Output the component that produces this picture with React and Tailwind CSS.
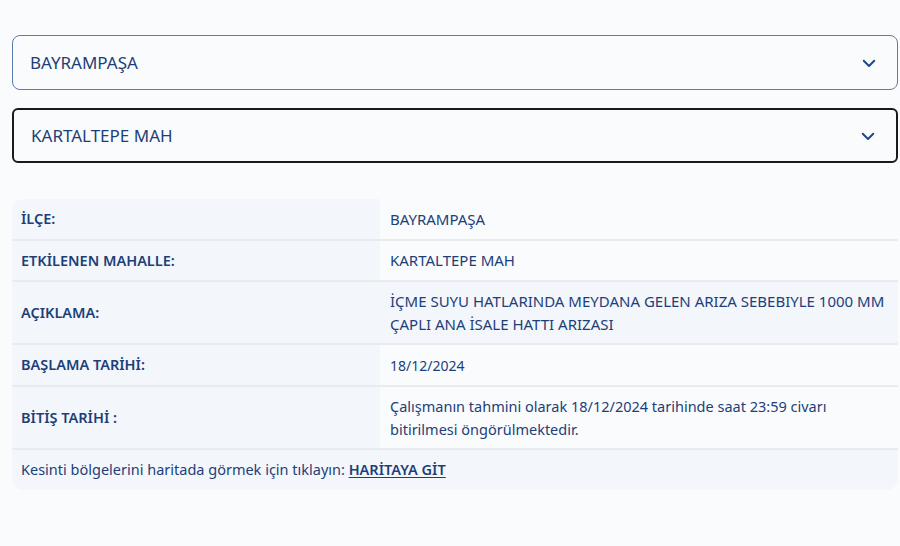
import React from 'react';

const Chevron = () => (
    <svg width="18" height="18" viewBox="0 0 24 24" fill="none" stroke="#1d4785" strokeWidth="2.6" strokeLinecap="round" strokeLinejoin="round">
        <path d="M5 9l7 7 7-7" />
    </svg>
);

const SelectBox = ({ value, active }) => (
    <div
        className={`flex items-center justify-between h-[55px] pl-[17px] pr-[19px] bg-[#f9fbfd] ${active ? 'border-2 border-[#1a1a1a] rounded-md' : 'border border-[#5b7cb3] rounded-lg'}`}
    >
        <span className="text-[17px] text-[#1d3f78]">{value}</span>
        <Chevron />
    </div>
);

const rows = [
    { label: 'İLÇE:', value: 'BAYRAMPAŞA', h: 'h-[42px]', size: 'text-[15px]' },
    { label: 'ETKİLENEN MAHALLE:', value: 'KARTALTEPE MAH', h: 'h-[41px]', size: 'text-[15px]' },
    {
        label: 'AÇIKLAMA:',
        value: 'İÇME SUYU HATLARINDA MEYDANA GELEN ARIZA SEBEBIYLE 1000 MM ÇAPLI ANA İSALE HATTI ARIZASI',
        h: 'h-[63px]',
        size: 'text-[15px]',
        shaded: true,
    },
    { label: 'BAŞLAMA TARİHİ:', value: '18/12/2024', h: 'h-[42px]', size: 'text-[14px]' },
    {
        label: 'BİTİŞ TARİHİ :',
        value: 'Çalışmanın tahmini olarak 18/12/2024 tarihinde saat 23:59 civarı bitirilmesi öngörülmektedir.',
        h: 'h-[63px]',
        size: 'text-[14.5px]',
    },
];

const App = () => {
    return (
        <div
            className="min-h-screen bg-[#f9fbfd] pl-3 pr-[2px] pt-[35px] text-[#1d3f78]"
            style={{ fontFamily: '"Noto Sans", "Open Sans", sans-serif' }}
        >
            <div className="flex flex-col gap-[18px]">
                <SelectBox value="BAYRAMPAŞA" />
                <SelectBox value="KARTALTEPE MAH" active />
            </div>

            <div className="mt-9 rounded-xl overflow-hidden">
                {rows.map((row) => (
                    <div key={row.label} className={`flex ${row.h} border-b-2 border-[#e8ebf0]`}>
                        <div className="w-[368px] shrink-0 flex items-center pl-[9px] bg-[#f3f6fb] text-[14.5px] font-semibold text-[#1d3f78]">
                            {row.label}
                        </div>
                        <div
                            className={`flex-1 flex items-center pl-[10px] pr-3 leading-[23px] text-[#1d3f78] ${row.size} ${row.shaded ? 'bg-[#f3f6fb]' : 'bg-[#f9fbfd]'}`}
                        >
                            <span className="max-w-[505px]">{row.value}</span>
                        </div>
                    </div>
                ))}
                <div className="h-[40px] flex items-center pl-[9px] bg-[#f3f6fb] text-[14.5px] text-[#1d3f78]">
                    Kesinti bölgelerini haritada görmek için tıklayın:&nbsp;
                    <a href="#" className="font-semibold underline underline-offset-2">HARİTAYA GİT</a>
                </div>
            </div>
        </div>
    );
};

export default App;
